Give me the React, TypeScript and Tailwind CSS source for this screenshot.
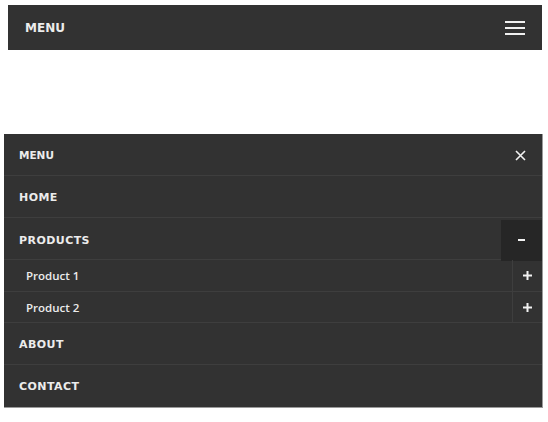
import { useState } from 'react';

const font = { fontFamily: '"DejaVu Sans", "Open Sans", sans-serif' };

function Plus() {
    return (
        <svg width="9" height="9" viewBox="0 0 9 9">
            <rect x="0" y="3.5" width="9" height="2" fill="#f2f2f2" />
            <rect x="3.5" y="0" width="2" height="9" fill="#f2f2f2" />
        </svg>
    );
}

export default function App() {
    const [open, setOpen] = useState(true);

    const top = 'h-[42px] flex items-center pt-[3px] px-[15px] border-b border-[#3e3e3e] text-[11px] font-bold tracking-[0.04em] text-[#ececec]';
    const sub = 'flex items-center justify-between border-b border-[#3e3e3e] text-[11.5px] font-semibold text-[#ececec]';

    return (
        <div className="w-[548px] h-[422px] bg-white pt-[5px]" style={font}>
            <div className="mx-[8px] w-[534px] h-[45px] bg-[#323232] flex items-center justify-between pl-[17px] pr-[17px]">
                <span className="text-[12px] font-bold text-[#ececec] pt-[1px]">MENU</span>
                <div className="flex flex-col gap-[4px] w-[20px]">
                    <div className="h-[2px] bg-[#f0f0f0]" />
                    <div className="h-[2px] bg-[#f0f0f0]" />
                    <div className="h-[2px] bg-[#f0f0f0]" />
                </div>
            </div>

            <div className="mt-[84px] ml-[4px] w-[539px] bg-[#323232] border-r border-b border-[#9a9a9a]">
                <div className={top + ' justify-between pr-[16px]'}>
                    <span className="tracking-normal text-[10.5px]">MENU</span>
                    <svg width="11" height="11" viewBox="0 0 11 11" className="-mt-[2px]">
                        <path d="M1 1 L10 10 M10 1 L1 10" stroke="#f2f2f2" strokeWidth="1.6" />
                    </svg>
                </div>
                <div className={top}>HOME</div>
                <div className={top + ' justify-between pr-0 pt-0'}>
                    <span className="pt-[3px]">PRODUCTS</span>
                    <button
                        onClick={() => setOpen(!open)}
                        className="w-[41px] h-[41px] bg-[#262626] flex items-center justify-center"
                    >
                        <div className="w-[7px] h-[2px] bg-[#f2f2f2]" />
                    </button>
                </div>
                {open && (
                    <>
                        <div className={sub + ' h-[32px]'}>
                            <span className="pl-[22px] pt-[1px]" style={{ fontFamily: '"Open Sans", sans-serif' }}>Product 1</span>
                            <div className="w-[30px] h-full border-l border-[#3e3e3e] flex items-center justify-center">
                                <Plus />
                            </div>
                        </div>
                        <div className={sub + ' h-[31px]'}>
                            <span className="pl-[22px] pt-[1px]" style={{ fontFamily: '"Open Sans", sans-serif' }}>Product 2</span>
                            <div className="w-[30px] h-full border-l border-[#3e3e3e] flex items-center justify-center">
                                <Plus />
                            </div>
                        </div>
                    </>
                )}
                <div className={top}>ABOUT</div>
                <div className={top + ' border-b-0'}>CONTACT</div>
            </div>
        </div>
    );
}
